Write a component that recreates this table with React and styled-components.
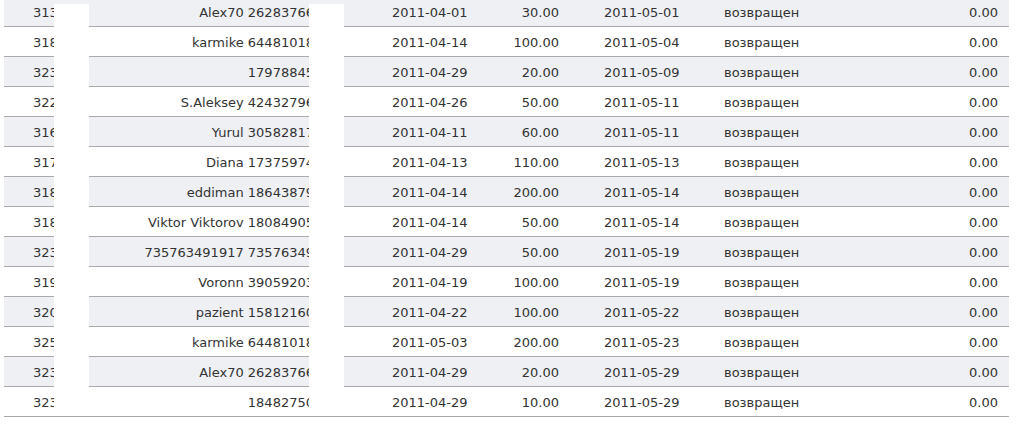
import React from 'react'
import styled, { createGlobalStyle } from 'styled-components'

const GlobalStyle = createGlobalStyle`
    body {
        margin:0;
        background:#fff;
        font-family:"DejaVu Sans", Verdana, sans-serif;
        overflow:hidden;
    }
`

const Wrapper = styled.div`
    position:relative;
    margin:-3px 0 0 4px;
    width:1005px;
`

const Table = styled.table`
    width:1005px;
    border-collapse:collapse;
    table-layout:fixed;
    font-size:13px;
    color:#333;
`

const Col = styled.col`
    width:${p => p.$w}px;
`

const Row = styled.tr`
    background:${p => p.$odd ? '#eef0f3' : '#fff'};
`

const Cell = styled.td`
    height:28px;
    padding:1px 0 0;
    padding-left:${p => p.$pl || 0}px;
    padding-right:${p => p.$pr || 0}px;
    text-align:${p => p.$align || 'left'};
    border-bottom:1px solid #aaa;
    white-space:nowrap;
    overflow:hidden;
    vertical-align:middle;
`

// white blocks hiding parts of ids and phones
const Mask = styled.div`
    position:absolute;
    top:7px;
    left:${p => p.$left}px;
    width:35px;
    height:411px;
    background:#fff;
`

const rows = [
    ['3135', 'Alex70 26283766', '2011-04-01', '30.00', '2011-05-01'],
    ['3186', 'karmike 64481018', '2011-04-14', '100.00', '2011-05-04'],
    ['3231', '17978845', '2011-04-29', '20.00', '2011-05-09'],
    ['3220', 'S.Aleksey 42432796', '2011-04-26', '50.00', '2011-05-11'],
    ['3162', 'Yurul 30582817', '2011-04-11', '60.00', '2011-05-11'],
    ['3174', 'Diana 17375974', '2011-04-13', '110.00', '2011-05-13'],
    ['3187', 'eddiman 18643879', '2011-04-14', '200.00', '2011-05-14'],
    ['3188', 'Viktor Viktorov 18084905', '2011-04-14', '50.00', '2011-05-14'],
    ['3233', '735763491917 73576349', '2011-04-29', '50.00', '2011-05-19'],
    ['3195', 'Voronn 39059203', '2011-04-19', '100.00', '2011-05-19'],
    ['3201', 'pazient 15812160', '2011-04-22', '100.00', '2011-05-22'],
    ['3253', 'karmike 64481018', '2011-05-03', '200.00', '2011-05-23'],
    ['3234', 'Alex70 26283766', '2011-04-29', '20.00', '2011-05-29'],
    ['3236', '18482750', '2011-04-29', '10.00', '2011-05-29'],
]

const App = () => {
    return (
        <>
            <GlobalStyle />
            <Wrapper>
                <Table>
                    <colgroup>
                        <Col $w={96} />
                        <Col $w={260} />
                        <Col $w={120} />
                        <Col $w={95} />
                        <Col $w={125} />
                        <Col $w={150} />
                        <Col $w={159} />
                    </colgroup>
                    <tbody>
                        {rows.map((r, i) => (
                            <Row key={i} $odd={i % 2 === 0}>
                                <Cell $pl={29}>{r[0]}</Cell>
                                <Cell $align='right' $pr={46}>{r[1]}</Cell>
                                <Cell $pl={32}>{r[2]}</Cell>
                                <Cell $align='right' $pr={16}>{r[3]}</Cell>
                                <Cell $pl={29}>{r[4]}</Cell>
                                <Cell $pl={24}>возвращен</Cell>
                                <Cell $align='right' $pr={11}>0.00</Cell>
                            </Row>
                        ))}
                    </tbody>
                </Table>
                <Mask $left={50} />
                <Mask $left={305} />
            </Wrapper>
        </>
    )
}

export default App
